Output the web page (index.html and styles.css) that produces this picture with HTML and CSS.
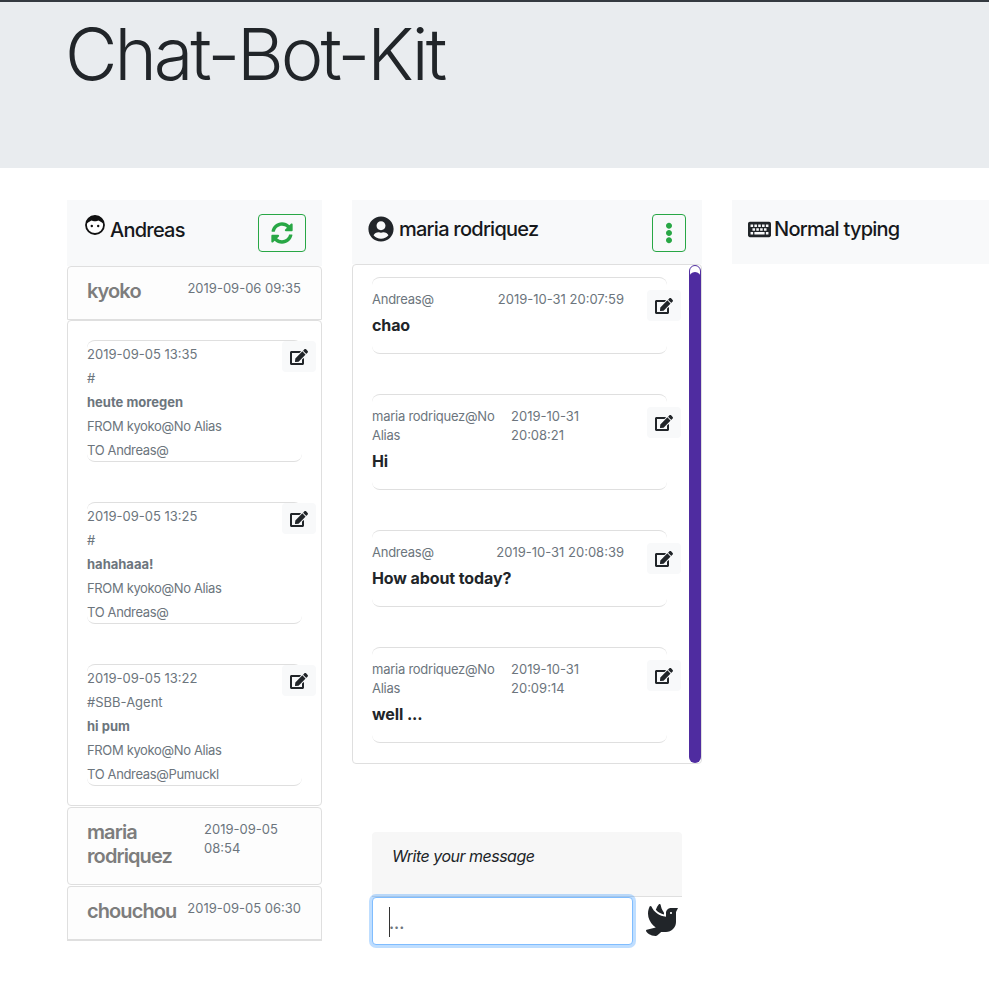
FILE: index.html
```html
<!DOCTYPE html>
<html lang="en">
<head>
<meta charset="utf-8">
<title>Chat-Bot-Kit</title>
<link rel="stylesheet" href="styles.css">
</head>
<body>
<svg class="defs" aria-hidden="true">
  <symbol id="i-edit" viewBox="0 0 576 512"><path d="M402.6 83.2l90.2 90.2c3.8 3.8 3.8 10 0 13.8L274.4 405.6l-92.8 10.3c-12.4 1.4-22.9-9.1-21.5-21.5l10.3-92.8L388.8 83.2c3.8-3.8 10-3.8 13.8 0zm162-22.9l-48.8-48.8c-15.2-15.2-39.9-15.2-55.2 0l-35.4 35.4c-3.8 3.8-3.8 10 0 13.8l90.2 90.2c3.8 3.8 10 3.8 13.8 0l35.4-35.4c15.2-15.3 15.2-40 0-55.2zM384 346.2V448H64V128h229.8c3.2 0 6.2-1.3 8.5-3.5l40-40c7.6-7.6 2.2-20.5-8.5-20.5H48C21.5 64 0 85.5 0 112v352c0 26.5 21.5 48 48 48h352c26.5 0 48-21.5 48-48V306.2c0-10.7-12.9-16-20.5-8.5l-40 40c-2.2 2.3-3.5 5.3-3.5 8.5z"/></symbol>
</svg>
<header class="jumbotron"><h1 class="title">Chat-Bot-Kit</h1></header>
<main class="row">
  <section class="col col-contacts">
    <div class="panel-head head-contacts">
      <h2 class="head-title">
        <svg class="face" viewBox="0 0 20 20"><circle cx="10" cy="10" r="9" fill="#fff" stroke="#111" stroke-width="1.800"/><path d="M1.500 8.500C2 3.500 5.500.8 10 .8s8 2.700 8.500 7.700C17 7.300 15.200 6.300 13.500 5.400c-1.500 1.100-5.500 1.100-7 0C4.800 6.300 3 7.300 1.500 8.500z" fill="#111"/><circle cx="6.800" cy="11" r="1.200" fill="#111"/><circle cx="13.200" cy="11" r="1.200" fill="#111"/></svg>
        <span>Andreas</span>
      </h2>
      <button class="btn-green btn-wide" type="button" aria-label="Refresh">
        <svg class="ico-sync" viewBox="0 0 512 512"><path d="M370.72 133.28C339.458 104.008 298.888 87.962 255.848 88c-77.458.068-144.328 53.178-162.791 126.85-1.344 5.363-6.122 9.15-11.651 9.15H24.103c-7.498 0-13.194-6.807-11.807-14.176C33.933 94.924 134.813 8 256 8c66.448 0 126.791 26.136 171.315 68.685L463.03 40.97C478.149 25.851 504 36.559 504 57.941V192c0 13.255-10.745 24-24 24H345.941c-21.382 0-32.09-25.851-16.971-40.971l41.75-41.749zM32 296h134.059c21.382 0 32.09 25.851 16.971 40.971l-41.75 41.75c31.262 29.273 71.835 45.319 114.876 45.28 77.418-.07 144.315-53.144 162.787-126.849 1.344-5.363 6.122-9.15 11.651-9.15h57.304c7.498 0 13.194 6.807 11.807 14.176C478.067 417.076 377.187 504 256 504c-66.448 0-126.791-26.136-171.315-68.685L48.97 471.03C33.851 486.149 8 475.441 8 454.059V320c0-13.255 10.745-24 24-24z"/></svg>
      </button>
    </div>
    <div class="contact contact-open">
      <span class="contact-name">kyoko</span><span class="contact-time">2019-09-06 09:35</span>
    </div>
    <div class="contact-body">
      <article class="note">
        <div>2019-09-05 13:35</div><div>#</div><div class="note-strong">heute moregen</div><div class="note-tight">FROM kyoko@No Alias</div><div class="note-tight">TO Andreas@</div>
        <button class="btn-edit" type="button" aria-label="Edit"><svg class="ico-edit"><use href="#i-edit"/></svg></button>
      </article>
      <article class="note">
        <div>2019-09-05 13:25</div><div>#</div><div class="note-strong">hahahaaa!</div><div class="note-tight">FROM kyoko@No Alias</div><div class="note-tight">TO Andreas@</div>
        <button class="btn-edit" type="button" aria-label="Edit"><svg class="ico-edit"><use href="#i-edit"/></svg></button>
      </article>
      <article class="note">
        <div>2019-09-05 13:22</div><div>#SBB-Agent</div><div class="note-strong">hi pum</div><div class="note-tight">FROM kyoko@No Alias</div><div class="note-tight">TO Andreas@Pumuckl</div>
        <button class="btn-edit" type="button" aria-label="Edit"><svg class="ico-edit"><use href="#i-edit"/></svg></button>
      </article>
    </div>
    <div class="contact contact-tall">
      <span class="contact-name">maria rodriquez</span><span class="contact-time time-wrap">2019-09-05 08:54</span>
    </div>
    <div class="contact contact-last">
      <span class="contact-name">chouchou</span><span class="contact-time">2019-09-05 06:30</span>
    </div>
  </section>

  <section class="col col-chat">
    <div class="panel-head head-chat">
      <h2 class="head-title">
        <svg class="ico-user" viewBox="0 0 496 512"><path d="M248 8C111 8 0 119 0 256s111 248 248 248 248-111 248-248S385 8 248 8zm0 96c48.6 0 88 39.4 88 88s-39.4 88-88 88-88-39.4-88-88 39.400-88 88-88zm0 344c-58.700 0-111.300-26.600-146.500-68.200 18.800-35.400 55.600-59.800 98.500-59.800 2.400 0 4.800.4 7.100 1.100 13 4.200 26.600 6.900 40.900 6.900 14.300 0 28-2.700 40.900-6.900 2.300-.7 4.700-1.100 7.100-1.100 42.900 0 79.700 24.400 98.500 59.800C359.300 421.400 306.700 448 248 448z"/></svg>
        <span>maria rodriquez</span>
      </h2>
      <button class="btn-green btn-narrow" type="button" aria-label="More">
        <svg class="ico-dots" viewBox="0 0 192 512"><path d="M96 184c39.800 0 72 32.200 72 72s-32.200 72-72 72-72-32.200-72-72 32.200-72 72-72zM24 80c0 39.800 32.200 72 72 72s72-32.200 72-72S135.800 8 96 8 24 40.200 24 80zm0 352c0 39.800 32.200 72 72 72s72-32.200 72-72-32.200-72-72-72-72 32.200-72 72z"/></svg>
      </button>
    </div>
    <div class="chat-box">
      <article class="msg">
        <div class="msg-meta"><span class="meta-name">Andreas@</span><span>2019-10-31 20:07:59</span></div>
        <div class="msg-text">chao</div>
        <button class="btn-edit" type="button" aria-label="Edit"><svg class="ico-edit"><use href="#i-edit"/></svg></button>
      </article>
      <article class="msg">
        <div class="msg-meta"><span class="meta-name meta-wrap">maria rodriquez@No Alias</span><span class="meta-time">2019-10-31 20:08:21</span></div>
        <div class="msg-text">Hi</div>
        <button class="btn-edit" type="button" aria-label="Edit"><svg class="ico-edit"><use href="#i-edit"/></svg></button>
      </article>
      <article class="msg">
        <div class="msg-meta"><span class="meta-name">Andreas@</span><span>2019-10-31 20:08:39</span></div>
        <div class="msg-text">How about today?</div>
        <button class="btn-edit" type="button" aria-label="Edit"><svg class="ico-edit"><use href="#i-edit"/></svg></button>
      </article>
      <article class="msg">
        <div class="msg-meta"><span class="meta-name meta-wrap">maria rodriquez@No Alias</span><span class="meta-time">2019-10-31 20:09:14</span></div>
        <div class="msg-text">well ...</div>
        <button class="btn-edit" type="button" aria-label="Edit"><svg class="ico-edit"><use href="#i-edit"/></svg></button>
      </article>
      <div class="scroll-cap"></div>
      <div class="scroll-thumb"></div>
    </div>
    <div class="composer">
      <div class="composer-label">Write your message</div>
      <div class="composer-row">
        <div class="input-wrap">
          <input class="composer-input" type="text" placeholder="...">
          <span class="caret"></span>
        </div>
        <svg class="ico-dove" viewBox="0 0 512 512"><path d="M288 167.200v-28.100c-28.200-36.300-47.100-79.300-54.100-125.200-2.100-13.500-19-18.800-27.800-8.300-21.100 24.900-37.700 54.100-48.900 86.500 34.200 38.300 80 64.600 130.800 75.100zM400 64c-44.200 0-80 35.900-80 80.100v59.400C215.600 197.300 127 133 87 41.800c-5.500-12.500-23.200-13.200-29-.9C41.400 76 32 115.200 32 156.600c0 70.800 34.100 136.900 85.100 185.900 13.200 12.700 26.100 23.200 38.900 32.800l-143.900 36C1.400 414-3.400 426.400 2.600 435.700 20 462.600 63 508.200 155.800 512c8 .3 16-2.600 22.100-7.900l65.200-56.100H320c88.400 0 160-71.500 160-159.900V128l32-64H400zm0 96.100c-8.800 0-16-7.200-16-16s7.200-16 16-16 16 7.200 16 16-7.200 16-16 16z"/></svg>
      </div>
    </div>
  </section>

  <section class="col col-mode">
    <div class="panel-head head-chat">
      <h2 class="head-title">
        <svg class="ico-keyboard" viewBox="0 0 576 512"><path fill-rule="evenodd" d="M48 64h480c26.500 0 48 21.500 48 48v288c0 26.500-21.500 48-48 48H48c-26.500 0-48-21.500-48-48V112c0-26.500 21.500-48 48-48zM64 128v64h64v-64zm96 0v64h64v-64zm96 0v64h64v-64zm96 0v64h64v-64zm96 0v64h64v-64zM112 224v64h64v-64zm96 0v64h64v-64zm96 0v64h64v-64zm96 0v64h64v-64zM64 320v64h64v-64zm96 0v64h256v-64zm288 0v64h64v-64z"/></svg>
        <span>Normal typing</span>
      </h2>
    </div>
  </section>
</main>
</body>
</html>
```
FILE: styles.css
```css
* { box-sizing: border-box; }
html, body { margin: 0; padding: 0; }
body {
  font-family: Inter, "Liberation Sans", sans-serif;
  color: #212529;
  background: #fff;
  overflow: hidden;
  height: 994px;
}
.defs { width: 0; height: 0; position: absolute; }

.jumbotron {
  height: 168px;
  background: #e9ecef;
  border-top: 2px solid #343a40;
  padding-left: 65px;
}
.title {
  margin: 0;
  font-size: 72px;
  font-weight: 300;
  line-height: 104px;
  letter-spacing: -3px;
}

.row {
  display: flex;
  gap: 30px;
  margin-top: 32px;
  padding-left: 67px;
}
.col-contacts { width: 255px; flex: none; }
.col-chat { width: 350px; flex: none; }
.col-mode { width: 257px; flex: none; }

.panel-head {
  background: #f8f9fa;
  display: flex;
  justify-content: space-between;
  align-items: flex-start;
}
.head-contacts { height: 66px; padding: 14px 16px 0 16px; }
.head-chat { height: 64px; padding: 14px 16px 0 16px; }
.head-title {
  margin: 0;
  display: flex;
  align-items: center;
  gap: 5px;
  font-size: 20px;
  font-weight: 500;
  line-height: 30px;
  letter-spacing: -.75px;
  color: #16181b;
}
.head-contacts .head-title { gap: 5px; padding-top: 1px; }
.face { width: 20px; height: 20px; margin: -10px 0 0 2px; }
.ico-user { width: 26px; height: 26px; fill: #212529; display: block; margin-top: -1px; }
.ico-keyboard { width: 23px; height: 23px; fill: #212529; display: block; margin-right: -2px; }

.btn-green {
  height: 38px;
  border: 1px solid #28a745;
  border-radius: 4px;
  background: transparent;
  padding: 0;
  display: flex;
  align-items: center;
  justify-content: center;
}
.btn-wide { width: 48px; }
.btn-narrow { width: 34px; }
.ico-sync { width: 22px; height: 22px; fill: #28a745; }
.ico-dots { width: 8px; height: 22px; fill: #28a745; }

.contact {
  display: flex;
  justify-content: space-between;
  align-items: flex-start;
  background: #fdfdfd;
  border: 1px solid #dfdfdf;
  border-radius: 4px;
  padding: 12px 20px 0 19px;
}
.contact-open { height: 54px; border-bottom-left-radius: 0; border-bottom-right-radius: 0; }
.contact-tall { height: 78px; margin-top: 1px; }
.contact-last { height: 55px; margin-top: 1px; border-radius: 4px 4px 0 0; border-width: 1px 1px 2px; }
.contact-name {
  font-size: 20px;
  font-weight: 600;
  line-height: 24px;
  letter-spacing: -.9px;
  color: #7d7d7d;
}
.contact-tall .contact-name { width: 100px; }
.contact-time {
  font-size: 13px;
  line-height: 19px;
  color: #6c757d;
  flex: none;
}
.time-wrap { width: 97px; flex: none; }

.contact-body {
  height: 486px;
  border: 1px solid #dfdfdf;
  border-radius: 4px;
  padding: 19px 19px 0;
}
.note {
  position: relative;
  height: 122px;
  width: 215px;
  margin-bottom: 40px;
  padding-top: 1px;
  border-top: 1px solid #dfdfdf;
  border-bottom: 1px solid #dfdfdf;
  border-radius: 8px;
  font-size: 13px;
  line-height: 24px;
  color: #6c757d;
}
.note-strong { font-weight: 700; }
.note-tight { letter-spacing: -.35px; }

.btn-edit {
  position: absolute;
  width: 34px;
  height: 31px;
  background: #f8f9fa;
  border: 0;
  border-radius: 4px;
  padding: 0;
  display: flex;
  align-items: center;
  justify-content: center;
}
.note .btn-edit { top: 0; right: -14px; }
.msg .btn-edit { top: 12px; right: -14px; }
.ico-edit { width: 18px; height: 16px; fill: #212529; display: block; }

.chat-box {
  position: relative;
  height: 500px;
  border: 1px solid #dfdfdf;
  border-radius: 4px;
  padding: 12px 0 0 19px;
  overflow: hidden;
}
.msg {
  position: relative;
  width: 295px;
  margin-bottom: 40px;
  padding: 12px 1px 16px 0;
  border-top: 1px solid #dfdfdf;
  border-bottom: 1px solid #dfdfdf;
  border-radius: 8px;
}
.msg-meta {
  display: flex;
  justify-content: space-between;
  width: 252px;
  font-size: 13px;
  line-height: 19px;
  color: #6c757d;
}
.meta-name { letter-spacing: -.25px; }
.meta-wrap { width: 126px; flex: none; }
.meta-time { width: 113px; flex: none; }
.msg-text {
  margin-top: 4px;
  font-size: 16px;
  font-weight: 700;
  line-height: 24px;
  letter-spacing: -.1px;
  color: #212529;
}
.scroll-cap {
  position: absolute;
  top: 0;
  right: 0;
  width: 12px;
  height: 14px;
  border: 1px solid #5230a0;
  border-radius: 6px 6px 0 0;
}
.scroll-thumb {
  position: absolute;
  top: 7px;
  right: 0;
  bottom: 0;
  width: 12px;
  background: #4f2ca0;
  border-radius: 6px;
}

.composer { width: 310px; margin: 68px 0 0 20px; }
.composer-label {
  height: 65px;
  background: #f7f7f7;
  border-bottom: 1px solid #dfdfdf;
  border-radius: 4px 4px 0 0;
  padding: 14px 20px 0;
  font-size: 16px;
  font-style: italic;
  line-height: 20px;
  letter-spacing: -.5px;
  color: #212529;
}
.composer-row { display: flex; align-items: flex-start; }
.input-wrap { position: relative; width: 261px; height: 48px; flex: none; }
.composer-input {
  width: 100%;
  height: 100%;
  border: 1px solid #80bdff;
  border-radius: 4px;
  box-shadow: 0 0 0 3px rgba(0, 123, 255, .25);
  outline: 0;
  padding: 4px 12px 0 16px;
  font-family: inherit;
  font-size: 16px;
  color: #495057;
  background: #fff;
}
.composer-input::placeholder { color: #6c757d; font-weight: 600; }
.caret {
  position: absolute;
  left: 17px;
  top: 10px;
  width: 1px;
  height: 30px;
  background: #333;
}
.ico-dove { width: 32px; height: 32px; fill: #212529; margin: 7px 0 0 13px; flex: none; }
```
